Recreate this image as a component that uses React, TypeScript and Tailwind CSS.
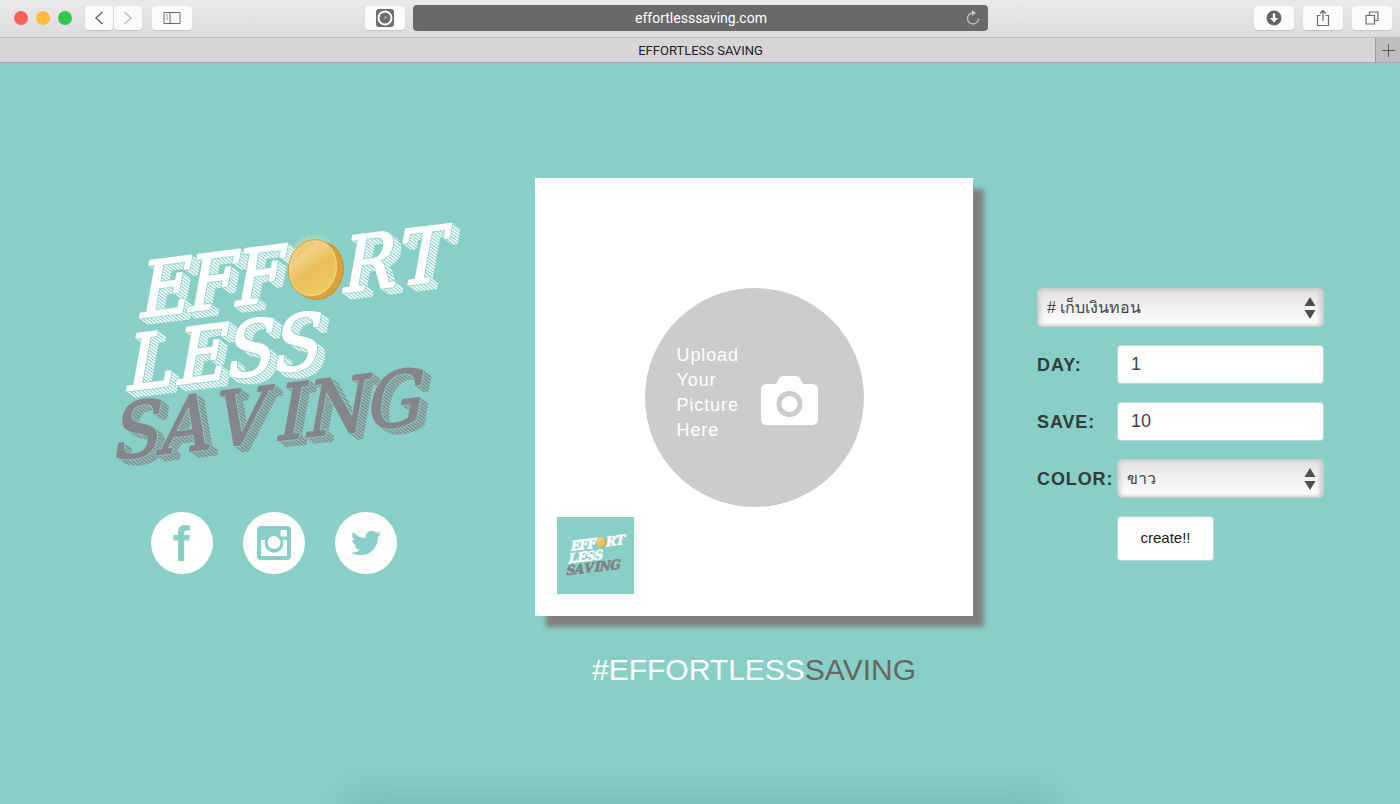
import { useId, type ReactNode } from "react";
import { FaTwitter } from "react-icons/fa";

const EXTRUDE_STEPS = [1, 2, 3, 4, 5, 6, 7, 8];

function WhiteLetters() {
    return (
        <g>
            <g transform="matrix(1 -0.123 -0.18 1 136 318)">
                <text x="0 48 95">EFF</text>
                <text x="203 259">RT</text>
            </g>
            <g transform="matrix(1 -0.123 -0.18 1 123 391)">
                <text x="0 50 100 147">LESS</text>
            </g>
        </g>
    );
}

function GreyLetters() {
    return (
        <g transform="matrix(1 -0.118 -0.18 1 110 460)">
            <text x="0 47 102 164 193 254">SAVING</text>
        </g>
    );
}

function Hatched({ id, color, children }: { id: string; color: string; children: ReactNode }) {
    return (
        <>
            <pattern id={`${id}-hatch`} width="3" height="2.600" patternUnits="userSpaceOnUse" patternTransform="rotate(38)">
                <rect width="3" height="1.500" fill={color} />
            </pattern>
            <mask id={`${id}-mask`} maskUnits="userSpaceOnUse" x="60" y="180" width="440" height="320">
                <g fill="#fff" stroke="#fff" strokeWidth="2">
                    {EXTRUDE_STEPS.map((step) => (
                        <g key={step} transform={`translate(${step} ${step * 0.75})`}>{children}</g>
                    ))}
                </g>
            </mask>
            <rect x="60" y="180" width="440" height="320" fill={`url(#${id}-hatch)`} mask={`url(#${id}-mask)`} />
            <g stroke="#88cfc8" strokeWidth="3.500" fill="#88cfc8">{children}</g>
            <g stroke={color} strokeWidth="2" fill={color}>{children}</g>
        </>
    );
}

function Logo({ className, small }: { className: string; small?: boolean }) {
    const id = useId();
    return (
        <svg
            viewBox="76 215 395 260"
            className={`overflow-visible ${className}`}
            role="img"
            aria-label="Effortless Saving"
            fontFamily="'DejaVu Serif Condensed', 'DejaVu Serif', serif"
            fontSize="78"
            fontWeight={small ? 700 : 400}
            strokeLinejoin="round"
        >
            <defs>
                <linearGradient id={`${id}-coin`} x1="0" y1="0" x2="1" y2="1">
                    <stop offset="0" stopColor="#e0b95a" />
                    <stop offset="0.3" stopColor="#f2d184" />
                    <stop offset="0.5" stopColor="#e8c05a" />
                    <stop offset="1" stopColor="#f0cb62" />
                </linearGradient>
                <radialGradient id={`${id}-glow`}>
                    <stop offset="0.7" stopColor="#fff0b5" stopOpacity="0.5" />
                    <stop offset="1" stopColor="#fff0b5" stopOpacity="0" />
                </radialGradient>
            </defs>
            {small ? (
                <g strokeWidth="4">
                    <g fill="#fff" stroke="#fff"><WhiteLetters /></g>
                    <g fill="#808285" stroke="#808285"><GreyLetters /></g>
                </g>
            ) : (
                <>
                    <Hatched id={`${id}-w`} color="#ffffff"><WhiteLetters /></Hatched>
                    <Hatched id={`${id}-g`} color="#85868a"><GreyLetters /></Hatched>
                </>
            )}
            <ellipse cx="314" cy="265" rx="28" ry="32" fill={`url(#${id}-glow)`} />
            <g transform="rotate(14 316 269)">
                <ellipse cx="319" cy="270" rx="25" ry="29.500" fill="#dca23f" />
                <ellipse cx="318" cy="270" rx="25" ry="29" fill="none" stroke="#b98128" strokeWidth="2" strokeDasharray="0.700 1.500" />
                <ellipse cx="313" cy="269" rx="24.500" ry="29" fill={`url(#${id}-coin)`} stroke="#cf9a3e" strokeWidth="0.800" />
                <ellipse cx="313" cy="269" rx="23" ry="27" fill="none" stroke="#f3d68c" strokeWidth="0.800" />
            </g>
        </svg>
    );
}

function ToolbarButton({ label, className, children }: { label: string; className?: string; children: ReactNode }) {
    return (
        <button
            type="button"
            aria-label={label}
            className={`flex h-6 items-center justify-center rounded bg-[#fbfbfb] text-[#6b6b6b] shadow-[0_1px_1px_#c4c2c4] ${className ?? "w-10"}`}
        >
            {children}
        </button>
    );
}

function BrowserBar() {
    return (
        <header className="font-[Roboto,sans-serif]">
            <div className="grid h-[38px] grid-cols-[1fr_575px_1fr] items-center gap-2 border-b border-[#bfbdbf] bg-linear-to-b from-[#ebe9eb] to-[#dddbdd] pb-[2px]">
                <div className="flex items-center pl-[14px]">
                    <div className="flex gap-2">
                        <span className="size-[14px] rounded-full bg-[#fc605c]" />
                        <span className="size-[14px] rounded-full bg-[#fdbc40]" />
                        <span className="size-[14px] rounded-full bg-[#34c84a]" />
                    </div>
                    <div className="ml-[13px] flex gap-px">
                        <ToolbarButton label="Back" className="w-7">
                            <svg viewBox="0 0 10 14" className="h-[14px] w-[10px]" fill="none" stroke="currentColor" strokeWidth="1.500">
                                <path d="M8.500 1 2 7l6.500 6" />
                            </svg>
                        </ToolbarButton>
                        <ToolbarButton label="Forward" className="w-7">
                            <svg viewBox="0 0 10 14" className="h-[14px] w-[10px]" fill="none" stroke="#bdbdbd" strokeWidth="1.500">
                                <path d="M1.500 1 8 7l-6.500 6" />
                            </svg>
                        </ToolbarButton>
                    </div>
                    <ToolbarButton label="Sidebar" className="ml-[10px] w-10">
                        <svg viewBox="0 0 18 14" className="h-[14px] w-[18px]" fill="none" stroke="currentColor">
                            <path d="M1 1.500h16v11H1zM7 1.500v11" />
                            <path d="M3 4h2M3 6h2M3 8h2" strokeWidth="0.700" />
                        </svg>
                    </ToolbarButton>
                    <ToolbarButton label="Extension" className="ml-auto w-10">
                        <svg viewBox="0 0 18 18" className="size-[18px]">
                            <rect width="18" height="18" rx="3" fill="#6e6e6e" />
                            <circle cx="9" cy="9" r="6.500" fill="none" stroke="#fff" strokeWidth="2" />
                            <circle cx="9.500" cy="8.500" r="1.200" fill="#aaa" />
                        </svg>
                    </ToolbarButton>
                </div>
                <div className="flex h-[26px] items-center rounded bg-[#696969] px-2 text-white">
                    <input
                        aria-label="Address"
                        defaultValue="effortlesssaving.com"
                        className="min-w-0 flex-1 bg-transparent pl-4 text-center text-sm outline-none"
                    />
                    <button type="button" aria-label="Reload">
                        <svg viewBox="0 0 14 16" className="h-4 w-[14px]" fill="none" stroke="#c8c8c8" strokeWidth="1.300">
                            <path d="M12.500 8.500A5.500 5.500 0 1 1 7 3h1" />
                            <path d="M6 0v6l4-3z" fill="#c8c8c8" stroke="none" />
                        </svg>
                    </button>
                </div>
                <div className="flex justify-end gap-[9px] pr-2">
                    <ToolbarButton label="Downloads">
                        <svg viewBox="0 0 16 16" className="size-4">
                            <circle cx="8" cy="8" r="7.500" fill="#666" />
                            <path d="M6.800 3.500h2.400V8H12l-4 4.500L4 8h2.800z" fill="#fff" />
                        </svg>
                    </ToolbarButton>
                    <ToolbarButton label="Share">
                        <svg viewBox="0 0 14 18" className="h-[18px] w-[14px]" fill="none" stroke="currentColor" strokeWidth="1.200">
                            <path d="M4.500 6.500H1.500v10h11v-10h-3M7 12V1.500M4 4.500l3-3 3 3" />
                        </svg>
                    </ToolbarButton>
                    <ToolbarButton label="Tabs">
                        <svg viewBox="0 0 14 14" className="size-[14px]" fill="none" stroke="currentColor" strokeWidth="1.200">
                            <path d="M1 4.500h8.500V13H1zM4.500 4.500V1H13v8.500H9.500" />
                        </svg>
                    </ToolbarButton>
                </div>
            </div>
            <div className="flex h-[25px] items-stretch border-b border-[#a9a7a9] bg-[#d7d5d7]">
                <h1 className="flex-1 pl-[26px] text-center text-[13px] leading-[25px] text-[#222]">EFFORTLESS SAVING</h1>
                <button type="button" aria-label="New tab" className="flex w-[25px] items-center justify-center border-l border-[#9d9b9d] bg-[#bfbdbf]">
                    <svg viewBox="0 0 13 13" className="size-[13px]" stroke="#5c5c5c">
                        <path d="M6.500 0v13M0 6.500h13" />
                    </svg>
                </button>
            </div>
        </header>
    );
}

function SocialLink({ label, children }: { label: string; children: ReactNode }) {
    return (
        <a href="#" aria-label={label} className="flex size-[62px] items-center justify-center rounded-full bg-white text-[#88cfc8]">
            {children}
        </a>
    );
}

function SelectBox({ id, label, value }: { id: string; label?: string; value: string }) {
    return (
        <div className="relative min-w-0 flex-1">
            <select
                id={id}
                aria-label={label}
                className="block h-[39px] w-full appearance-none rounded-[5px] border border-[#c8cccc] bg-linear-to-b from-[#e2e2e2] to-white px-[9px] text-base text-[#444] shadow-[inset_2px_0_4px_#ccc,inset_-3px_0_4px_#ccc] outline-none"
            >
                <option>{value}</option>
            </select>
            <svg viewBox="0 0 12 24" className="pointer-events-none absolute top-2 right-2 h-6 w-3" fill="#4f4f4f">
                <path d="M6 1l5.500 9H.5zM6 23l5.500-9H.5z" />
            </svg>
        </div>
    );
}

function Field({ id, label, children }: { id: string; label: string; children: ReactNode }) {
    return (
        <div className="flex items-center">
            <label htmlFor={id} className="w-20 shrink-0 text-lg font-bold tracking-wider text-[#333b3b]">
                {label}
            </label>
            {children}
        </div>
    );
}

const inputClass = "h-[39px] min-w-0 flex-1 rounded-[4px] border border-[#bcd5d2] bg-white px-[13px] text-lg text-[#444] outline-none";

export default function App() {
    return (
        <div className="flex min-h-screen flex-col bg-[#88cfc8] font-['Liberation_Sans','Noto_Sans',sans-serif]">
            <BrowserBar />
            <main className="relative flex flex-1 items-start justify-center gap-16 overflow-hidden pt-[115px]">
                <section className="mt-[37px] w-[395px]">
                    <Logo className="w-full" />
                    <nav className="mt-[37px] flex justify-center gap-[30px]">
                        <SocialLink label="Facebook">
                            <svg viewBox="0 0 18 36" className="h-9 w-[18px]" fill="currentColor">
                                <path d="M5 36V15.500H.5V10H5V7.500C5 2.500 7.500.3 12 .3c2 0 3.800.1 5 .4v4.800h-3c-2.300 0-2.800 1-2.800 2.700V10H17l-.8 5.500h-5V36z" />
                            </svg>
                        </SocialLink>
                        <SocialLink label="Instagram">
                            <svg viewBox="0 0 34 34" className="size-[34px]">
                                <rect width="34" height="34" rx="4" fill="currentColor" />
                                <path d="M4 14h4a9 9 0 0 0-.3 3.500 9.300 9.300 0 0 0 18.600 0A9 9 0 0 0 26 14h4v16H4z" fill="#fff" />
                                <circle cx="17" cy="16.500" r="6.500" fill="#fff" />
                                <rect x="23.500" y="4" width="6.500" height="6.500" rx="1" fill="#fff" />
                            </svg>
                        </SocialLink>
                        <SocialLink label="Twitter">
                            <FaTwitter className="size-[30px]" />
                        </SocialLink>
                    </nav>
                </section>

                <section className="w-[438px]">
                    <div className="relative flex aspect-square items-center justify-center bg-white shadow-[11px_11px_5px_#808080]">
                        <button type="button" className="flex size-[219px] items-center justify-between rounded-full bg-[#ccc] pr-[46px] pb-2 pl-8 text-white">
                            <span className="w-[70px] text-left text-lg leading-[25px] tracking-wider">Upload Your Picture Here</span>
                            <svg viewBox="0 0 57 50" className="mt-4 h-[50px] w-[57px]">
                                <path
                                    d="M6 8h9l3-5.500Q19.500 0 22 0h13q2.500 0 4 2.500L42 8h9q6 0 6 6v29q0 6-6 6H6q-6 0-6-6V14q0-6 6-6z"
                                    fill="#fff"
                                />
                                <circle cx="28.500" cy="28" r="10.500" fill="#fff" stroke="#ccc" strokeWidth="5" />
                            </svg>
                        </button>
                        <div className="absolute bottom-[22px] left-[22px] flex size-[77px] items-center justify-center bg-[#88cfc8] pr-1">
                            <Logo className="w-[68px]" small />
                        </div>
                    </div>
                    <h2 className="mt-8 text-center text-[30px] leading-[44px] text-white">
                        #EFFORTLESS<span className="text-[#666]">SAVING</span>
                    </h2>
                </section>

                <form className="mt-[110px] flex w-[287px] flex-col gap-[18px]" onSubmit={(e) => e.preventDefault()}>
                    <div className="flex">
                        <SelectBox id="tag" label="Hashtag" value="# เก็บเงินทอน" />
                    </div>
                    <Field id="day" label="DAY:">
                        <input id="day" defaultValue="1" className={inputClass} />
                    </Field>
                    <Field id="save" label="SAVE:">
                        <input id="save" defaultValue="10" className={inputClass} />
                    </Field>
                    <Field id="color" label="COLOR:">
                        <SelectBox id="color" value="ขาว" />
                    </Field>
                    <button type="submit" className="ml-20 h-[45px] w-[97px] rounded-[4px] border border-[#bcd5d2] bg-white text-[15px] text-[#222]">
                        create!!
                    </button>
                </form>

                <div className="absolute inset-x-[355px] -bottom-6 h-6 shadow-[0_0_36px_10px_#78bab2]" />
            </main>
        </div>
    );
}
